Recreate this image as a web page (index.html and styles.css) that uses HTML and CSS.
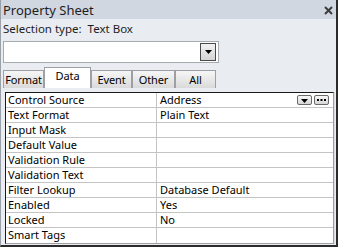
FILE: index.html
```html
<!DOCTYPE html>
<html lang="en">
<head>
  <meta charset="UTF-8">
  <title>Property Sheet</title>
  <link rel="stylesheet" href="styles.css">
</head>
<body>
  <div class="sheet">
    <div class="title-bar">
      <span class="title">Property Sheet</span>
      <svg class="close" width="9" height="9" viewBox="0 0 9 9">
        <path d="M1 1 L8 8 M8 1 L1 8" stroke="#3c3c3c" stroke-width="2"/>
      </svg>
    </div>

    <div class="body">
      <div class="selection">Selection type:&nbsp; Text Box</div>

      <div class="combo">
        <span class="combo-btn">
          <svg width="7" height="4" viewBox="0 0 7 4"><path d="M0 0 H7 L3.5 4 Z" fill="#000"/></svg>
        </span>
      </div>

      <div class="tabs">
        <div class="tab">Format</div>
        <div class="tab active">Data</div>
        <div class="tab">Event</div>
        <div class="tab other">Other</div>
        <div class="tab">All</div>
      </div>

      <div class="props">
        <div class="row">
          <div class="name">Control Source</div>
          <div class="value">
            <span>Address</span>
            <span class="cell-btns">
              <span class="cell-btn">
                <svg width="7" height="4" viewBox="0 0 7 4"><path d="M0 0 H7 L3.5 4 Z" fill="#000"/></svg>
              </span>
              <span class="cell-btn dots">
                <svg width="9" height="2" viewBox="0 0 9 2">
                  <rect x="0" y="0" width="2" height="2" fill="#000"/>
                  <rect x="3.5" y="0" width="2" height="2" fill="#000"/>
                  <rect x="7" y="0" width="2" height="2" fill="#000"/>
                </svg>
              </span>
            </span>
          </div>
        </div>
        <div class="row"><div class="name">Text Format</div><div class="value">Plain Text</div></div>
        <div class="row"><div class="name">Input Mask</div><div class="value"></div></div>
        <div class="row"><div class="name">Default Value</div><div class="value"></div></div>
        <div class="row"><div class="name">Validation Rule</div><div class="value"></div></div>
        <div class="row"><div class="name">Validation Text</div><div class="value"></div></div>
        <div class="row"><div class="name">Filter Lookup</div><div class="value">Database Default</div></div>
        <div class="row"><div class="name">Enabled</div><div class="value">Yes</div></div>
        <div class="row"><div class="name">Locked</div><div class="value">No</div></div>
        <div class="row"><div class="name">Smart Tags</div><div class="value"></div></div>
      </div>
    </div>
  </div>
</body>
</html>
```

FILE: styles.css
```css
* {
  margin: 0;
  padding: 0;
  box-sizing: border-box;
}

body {
  background: #fff;
  font-family: 'Noto Sans', 'Open Sans', sans-serif;
  font-size: 11px;
  color: #000;
}

.sheet {
  width: 338px;
  height: 247px;
  background: #e9ecf0;
  border-left: 1px solid #9aa0a8;
  border-right: 2px solid #2b2b2b;
  border-bottom: 2px solid #2b2b2b;
  display: flex;
  flex-direction: column;
}

.title-bar {
  height: 19px;
  background: #d0d7e0;
  display: flex;
  align-items: center;
  justify-content: space-between;
  padding: 0 3px 0 2px;
}

.title {
  font-size: 13px;
  color: #1e1e1e;
}

.close {
  margin-top: 1px;
}

.body {
  flex: 1;
  padding: 2px 2px 0 2px;
}

.selection {
  height: 16px;
  line-height: 16px;
  font-size: 11.5px;
  color: #1e1e1e;
}

.combo {
  margin-top: 4px;
  width: 216px;
  height: 22px;
  background: #fff;
  border: 1px solid #a7abb0;
  display: flex;
  justify-content: flex-end;
  align-items: center;
  padding-right: 2px;
}

.combo-btn {
  width: 16px;
  height: 18px;
  border: 1px solid #4a4a4a;
  background: linear-gradient(#f2f2f2, #d4d4d4);
  display: flex;
  align-items: center;
  justify-content: center;
}

.tabs {
  margin-top: 3px;
  height: 22px;
  display: flex;
  align-items: flex-end;
}

.tab {
  height: 18px;
  width: 41px;
  border: 1px solid #9ca0a6;
  border-bottom: none;
  background: linear-gradient(#f6f6f6, #dadada);
  text-align: center;
  line-height: 17px;
  font-size: 11px;
  letter-spacing: -0.1px;
}

.tab.other {
  width: 43px;
}

.tab.active {
  height: 21px;
  width: 47px;
  background: #fff;
  line-height: 15px;
}

.props {
  margin-top: 4px;
  margin-left: 2px;
  width: 329px;
  border-top: 1px solid #1a1a1a;
  border-left: 1px solid #1a1a1a;
  border-right: 1px solid #a0a0a0;
  border-bottom: 1px solid #a0a0a0;
  background: #fff;
  box-shadow: 1px 0 0 #d8dbe0;
}

.row {
  display: grid;
  grid-template-columns: 151px 1fr;
  height: 15px;
  border-bottom: 1px solid #c4c4c4;
}

.row:last-child {
  border-bottom: none;
}

.name,
.value {
  padding-left: 2px;
  line-height: 14px;
  font-size: 11px;
  white-space: nowrap;
}

.name {
  border-right: 1px solid #c4c4c4;
}

.value {
  padding-left: 3px;
  display: flex;
  justify-content: space-between;
}

.cell-btns {
  display: flex;
  gap: 2px;
  padding: 2px 4px 0 0;
}

.cell-btn {
  width: 15px;
  height: 10px;
  border: 1px solid #6a6a6a;
  border-radius: 2px;
  background: linear-gradient(#fafafa, #d6d6d6);
  display: flex;
  align-items: flex-end;
  justify-content: center;
  padding-bottom: 1px;
}

.cell-btn.dots {
  align-items: center;
  padding-bottom: 0;
}
```
